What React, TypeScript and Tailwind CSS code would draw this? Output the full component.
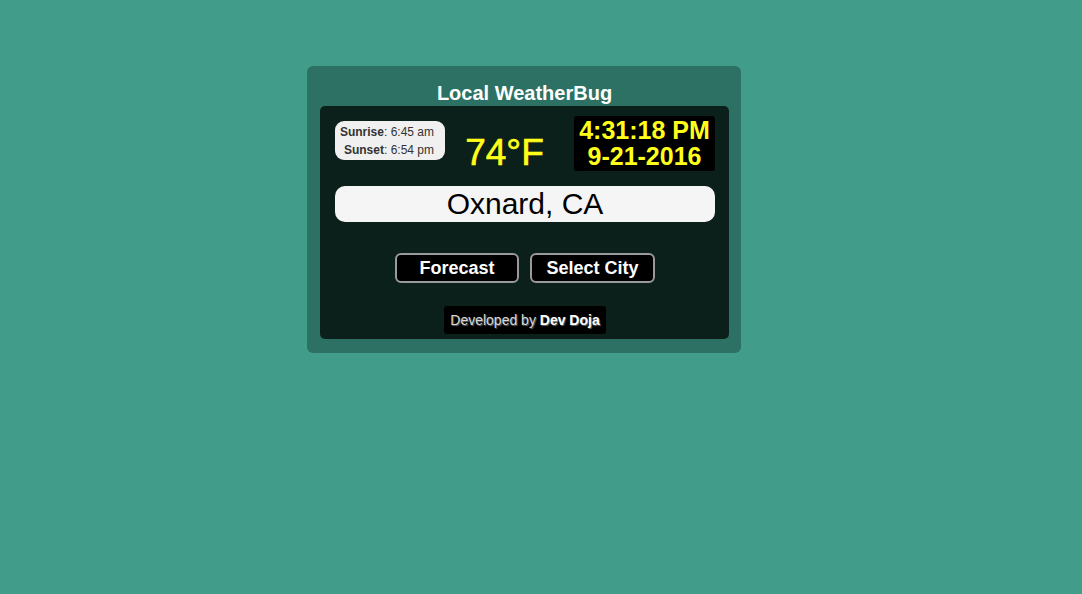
import React from "react";

// sunrise / sunset pill
function SunTimes() {
  return (
    <div className="mt-[15px] w-[110px] h-[39px] rounded-[9px] bg-[#f0f0f0] text-[#333] text-[12px] leading-[18px] text-right pr-[11px] pt-[2px]">
      <div>
        <span className="font-bold">Sunrise</span>: 6:45 am
      </div>
      <div>
        <span className="font-bold">Sunset</span>: 6:54 pm
      </div>
    </div>
  );
}

function Clock() {
  return (
    <div className="mt-[10px] w-[141px] h-[55px] rounded-[3px] bg-black text-[#ffff1a] font-bold text-[25px] leading-[26px] text-center pt-[1px]">
      <div>4:31:18 PM</div>
      <div>9-21-2016</div>
    </div>
  );
}

export default function App() {
  return (
    <div
      className="min-h-[594px] w-full bg-[#429c8a] pt-[66px]"
      style={{ fontFamily: "'Liberation Sans', Arial, sans-serif" }}
    >
      <div className="ml-[307px] w-[434px] rounded-[6px] bg-[#2c7163] px-[13px] pb-[14px] pt-[16px] pr-[12px]">
        <h1 className="text-center text-white font-bold text-[20px] leading-[22px] mb-[2px]">
          Local WeatherBug
        </h1>

        <div className="rounded-[5px] bg-[#0b201b] px-[15px] pr-[14px] pb-[5px]">
          <div className="flex justify-between items-start h-[65px]">
            <SunTimes />
            <div className="mt-[27px] text-[#ffff1a] text-[37px] leading-[40px] mr-[10px] [-webkit-text-stroke:0.6px_#ffff1a]">
              74°F
            </div>
            <Clock />
          </div>

          <div className="mt-[15px] h-[36px] rounded-[10px] bg-[#f5f5f5] text-center text-black text-[30px] leading-[36px]">
            Oxnard, CA
          </div>

          <div className="mt-[31px] flex justify-center gap-[11px]">
            <button className="w-[124px] h-[30px] rounded-[6px] border-2 border-[#9a9a9a] bg-black text-white font-bold text-[18px] leading-[24px]">
              Forecast
            </button>
            <button className="w-[125px] h-[30px] rounded-[6px] border-2 border-[#9a9a9a] bg-black text-white font-bold text-[18px] leading-[24px]">
              Select City
            </button>
          </div>

          <div className="mt-[23px] flex justify-center">
            <div className="h-[28px] px-[6px] rounded-[3px] bg-black text-[14px] leading-[28px]">
              <span className="text-[#d8d8d8] [text-shadow:1px_1px_1px_#666]">Developed by </span>
              <span className="text-white font-bold [text-shadow:1px_1px_1px_#666]">Dev Doja</span>
            </div>
          </div>
        </div>
      </div>
    </div>
  );
}
